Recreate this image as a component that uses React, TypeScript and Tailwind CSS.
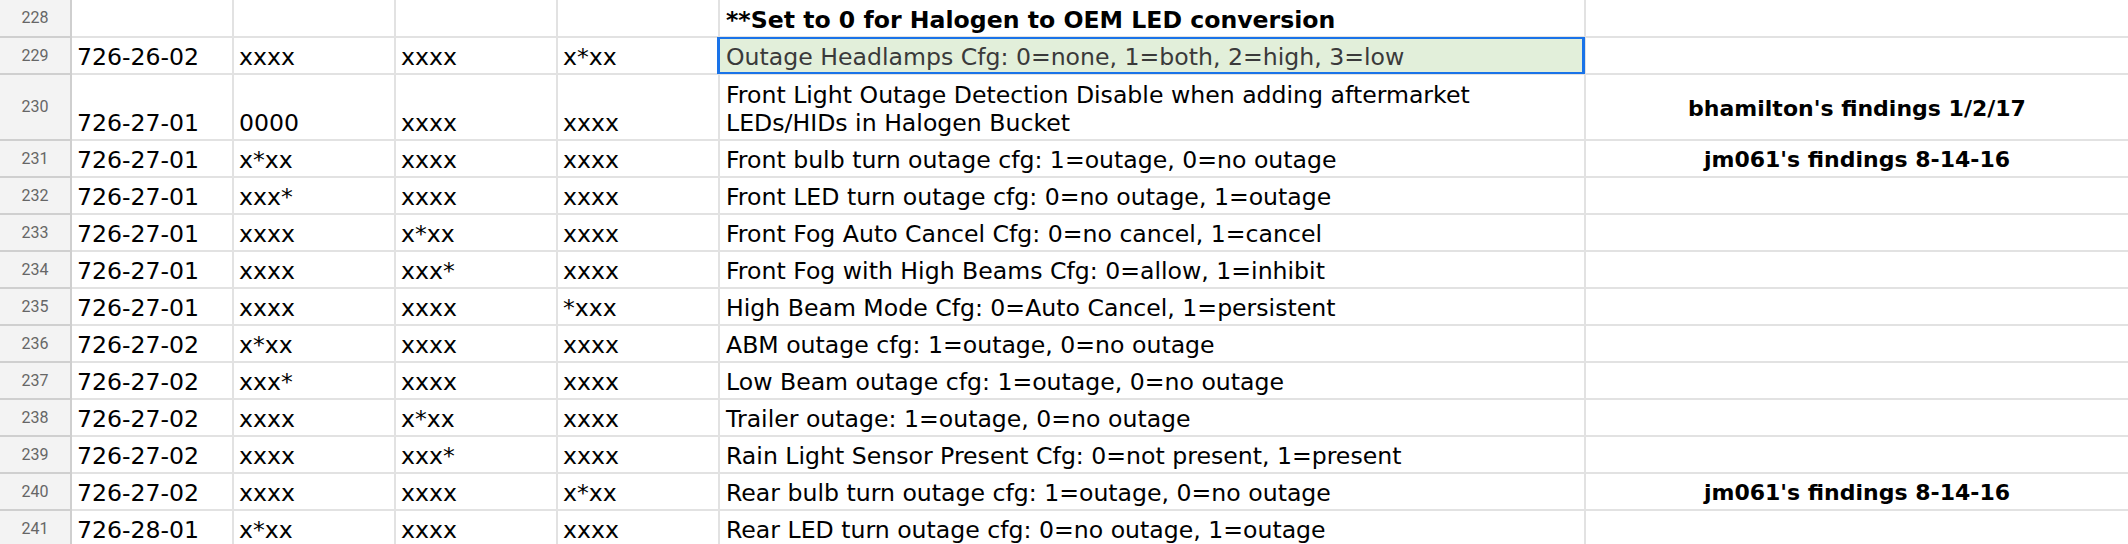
import React from "react";

type Row = {
  n: number;
  h: number;
  c: [string, string, string, string];
  desc: React.ReactNode;
  note?: string;
  bold?: boolean;
  selected?: boolean;
};

const rows: Row[] = [
  { n: 228, h: 38, c: ["", "", "", ""], desc: "**Set to 0 for Halogen to OEM LED conversion", bold: true },
  { n: 229, h: 37, c: ["726-26-02", "xxxx", "xxxx", "x*xx"], desc: "Outage Headlamps Cfg: 0=none, 1=both, 2=high, 3=low", selected: true },
  {
    n: 230,
    h: 66,
    c: ["726-27-01", "0000", "xxxx", "xxxx"],
    desc: (
      <>
        Front Light Outage Detection Disable when adding aftermarket
        <br />
        LEDs/HIDs in Halogen Bucket
      </>
    ),
    note: "bhamilton's findings 1/2/17",
  },
  { n: 231, h: 37, c: ["726-27-01", "x*xx", "xxxx", "xxxx"], desc: "Front bulb turn outage cfg: 1=outage, 0=no outage", note: "jm061's findings 8-14-16" },
  { n: 232, h: 37, c: ["726-27-01", "xxx*", "xxxx", "xxxx"], desc: "Front LED turn outage cfg: 0=no outage, 1=outage" },
  { n: 233, h: 37, c: ["726-27-01", "xxxx", "x*xx", "xxxx"], desc: "Front Fog Auto Cancel Cfg: 0=no cancel, 1=cancel" },
  { n: 234, h: 37, c: ["726-27-01", "xxxx", "xxx*", "xxxx"], desc: "Front Fog with High Beams Cfg: 0=allow, 1=inhibit" },
  { n: 235, h: 37, c: ["726-27-01", "xxxx", "xxxx", "*xxx"], desc: "High Beam Mode Cfg: 0=Auto Cancel, 1=persistent" },
  { n: 236, h: 37, c: ["726-27-02", "x*xx", "xxxx", "xxxx"], desc: "ABM outage cfg: 1=outage, 0=no outage" },
  { n: 237, h: 37, c: ["726-27-02", "xxx*", "xxxx", "xxxx"], desc: "Low Beam outage cfg: 1=outage, 0=no outage" },
  { n: 238, h: 37, c: ["726-27-02", "xxxx", "x*xx", "xxxx"], desc: "Trailer outage: 1=outage, 0=no outage" },
  { n: 239, h: 37, c: ["726-27-02", "xxxx", "xxx*", "xxxx"], desc: "Rain Light Sensor Present Cfg: 0=not present, 1=present" },
  { n: 240, h: 37, c: ["726-27-02", "xxxx", "xxxx", "x*xx"], desc: "Rear bulb turn outage cfg: 1=outage, 0=no outage", note: "jm061's findings 8-14-16" },
  { n: 241, h: 37, c: ["726-28-01", "x*xx", "xxxx", "xxxx"], desc: "Rear LED turn outage cfg: 0=no outage, 1=outage" },
];

const font = { fontFamily: '"DejaVu Sans", Verdana, sans-serif' };

export default function App() {
  return (
    <div className="w-[2128px] h-[544px] overflow-hidden bg-white" style={font}>
      {rows.map((r) => (
        <div key={r.n} className="flex" style={{ height: r.h }}>
          <div
            className="w-[72px] shrink-0 flex items-center justify-center bg-[#f3f3f3] border-r-2 border-b-2 border-[#cfcfcf] text-[16px] text-[#666666]"
            style={{ fontFamily: 'Roboto, "Liberation Sans", Arial, sans-serif' }}
          >
            {r.n}
          </div>
          {r.c.map((v, i) => (
            <div
              key={i}
              className="w-[162px] shrink-0 box-border border-r-2 border-b-2 border-[#e2e2e2] flex items-end pl-[5px] pb-[2px] text-[23.6px] leading-[28px] text-black whitespace-nowrap"
            >
              {v}
            </div>
          ))}
          <div
            className={
              "relative w-[866px] shrink-0 box-border border-r-2 border-b-2 border-[#e2e2e2] flex items-end pl-[6px] pb-[2px] text-[23.6px] leading-[28px] whitespace-nowrap " +
              (r.selected ? "bg-[#e2efda] text-[#3a3a3a]" : "text-black") +
              (r.bold ? " font-bold" : "")
            }
          >
            <span>{r.desc}</span>
            {r.selected && (
              <div className="absolute top-[-1px] left-[-3px] right-[-1px] bottom-[-1px] border-y-2 border-x-[3px] border-[#1a73e8] pointer-events-none" />
            )}
          </div>
          <div className="flex-1 box-border border-b-2 border-[#e2e2e2] flex items-center justify-center pt-[2px] text-[22px] font-bold text-black whitespace-nowrap">
            {r.note ?? ""}
          </div>
        </div>
      ))}
    </div>
  );
}
